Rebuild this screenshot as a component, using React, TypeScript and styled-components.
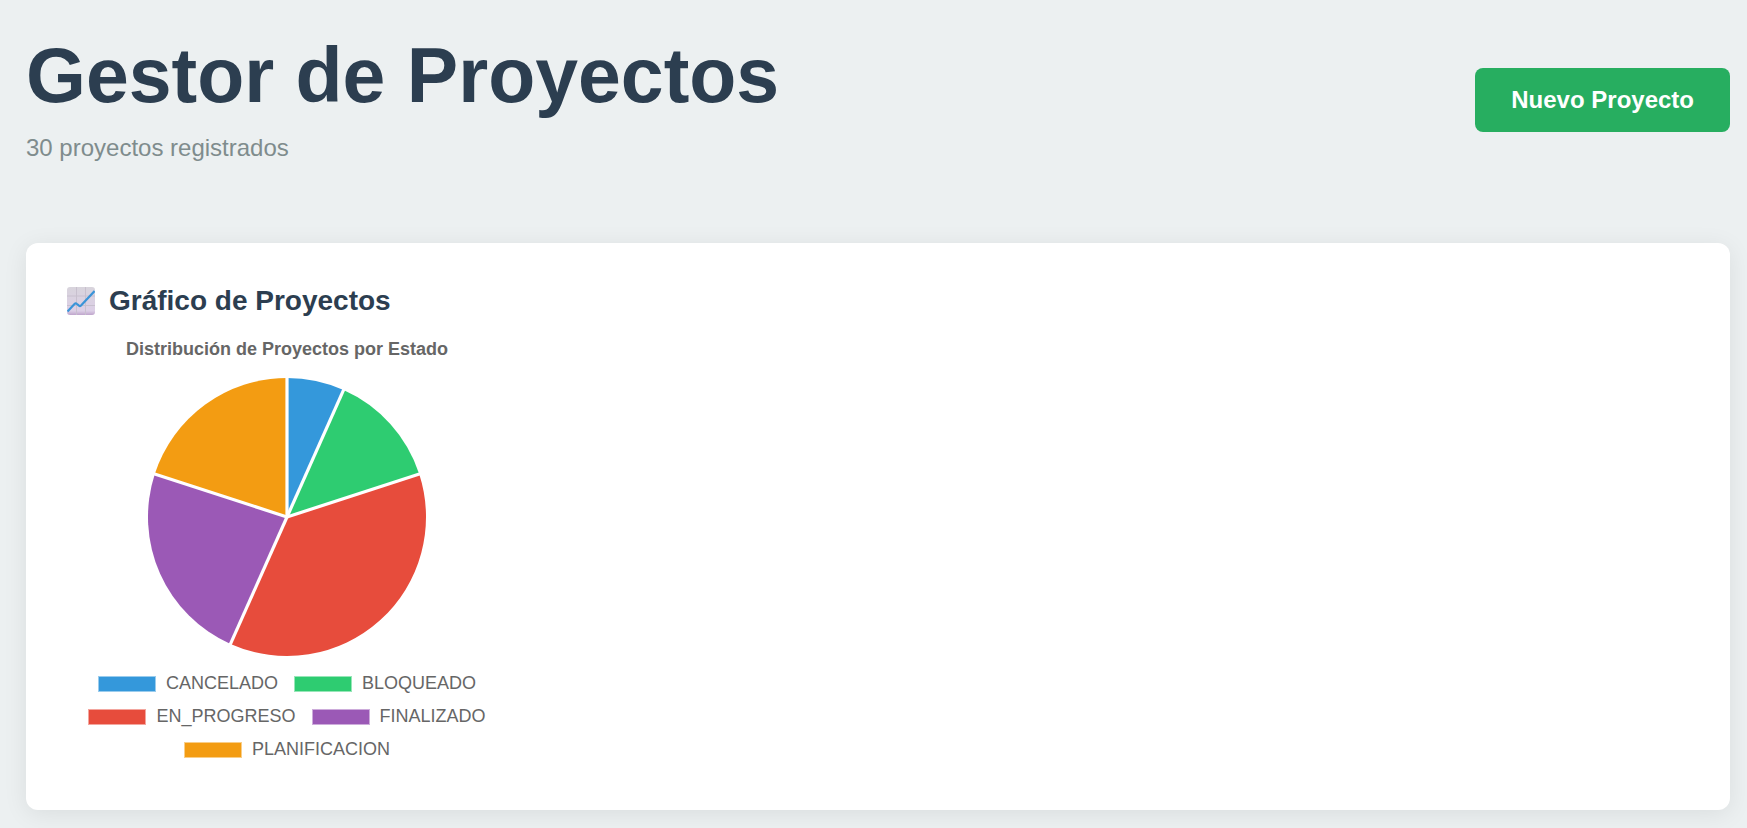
import React from 'react';
import styled, { createGlobalStyle } from 'styled-components';

const GlobalStyle = createGlobalStyle`
  *, *::before, *::after { box-sizing: border-box; }
  body {
    margin: 0;
    background: #ecf0f1;
    color: #2c3e50;
    font-family: "Liberation Sans", Arial, sans-serif;
  }
`;

const Page = styled.main`
  padding: 31px 17px 18px 26px;
`;

const Header = styled.header`
  display: flex;
  align-items: center;
  justify-content: space-between;
  gap: 24px;
  margin-bottom: 74px;
`;

const Title = styled.h1`
  margin: 0 0 8px;
  font-size: 77px;
  line-height: 88px;
  font-weight: 700;
`;

const Subtitle = styled.p`
  margin: 0;
  font-size: 24px;
  line-height: 42px;
  color: #7f8c8d;
`;

const PrimaryButton = styled.button`
  flex-shrink: 0;
  height: 64px;
  padding: 0 36px;
  border: 0;
  border-radius: 8px;
  background: #27ae60;
  color: #fff;
  font-family: inherit;
  font-size: 24px;
  font-weight: 700;
  cursor: pointer;
`;

const Card = styled.section`
  padding: 41px 41px 44px;
  border-radius: 12px;
  background: #fff;
  box-shadow: 0 4px 24px rgba(0, 0, 0, 0.08);
`;

const CardTitle = styled.h2`
  display: flex;
  align-items: center;
  gap: 14px;
  margin: 0 0 20px;
  font-size: 28px;
  line-height: 34px;
  font-weight: 700;
`;

const Chart = styled.figure`
  display: flex;
  flex-direction: column;
  align-items: center;
  width: 440px;
  max-width: 100%;
  margin: 0;
  color: #666;
  font-size: 18px;
`;

const ChartTitle = styled.figcaption`
  margin-bottom: 17px;
  line-height: 22px;
  font-weight: 700;
`;

const Legend = styled.ul`
  display: flex;
  flex-wrap: wrap;
  justify-content: center;
  column-gap: 16px;
  margin: 10px 0 0;
  padding: 0 20px;
  list-style: none;
`;

const LegendItem = styled.li`
  display: flex;
  align-items: center;
  gap: 10px;
  line-height: 33px;
`;

const Swatch = styled.span<{ $color: string }>`
  width: 58px;
  height: 16px;
  border: 1px solid rgba(255, 255, 255, 0.5);
  background: ${({ $color }) => $color};
`;

const slices = [
  { label: 'CANCELADO', value: 2, color: '#3498db' },
  { label: 'BLOQUEADO', value: 4, color: '#2ecc71' },
  { label: 'EN_PROGRESO', value: 11, color: '#e74c3c' },
  { label: 'FINALIZADO', value: 7, color: '#9b59b6' },
  { label: 'PLANIFICACION', value: 6, color: '#f39c12' },
];

const total = slices.reduce((sum, s) => sum + s.value, 0);

function point(fraction: number, radius: number) {
  const angle = fraction * Math.PI * 2 - Math.PI / 2;
  return `${140 + radius * Math.cos(angle)} ${140 + radius * Math.sin(angle)}`;
}

function PieChart() {
  let start = 0;
  const arcs = slices.map((s) => {
    const from = start / total;
    start += s.value;
    return { ...s, from, to: start / total };
  });
  return (
    <svg width="280" height="280" viewBox="0 0 280 280" role="img" aria-label="Distribución de Proyectos por Estado">
      {arcs.map((a) => (
        <path
          key={a.label}
          fill={a.color}
          d={`M140 140L${point(a.from, 139)}A139 139 0 ${a.to - a.from > 0.5 ? 1 : 0} 1 ${point(a.to, 139)}Z`}
        />
      ))}
      {arcs.map((a) => (
        <path key={a.label} stroke="#fff" strokeWidth="3.2" d={`M140 140L${point(a.from, 140)}`} />
      ))}
    </svg>
  );
}

function TrendIcon() {
  return (
    <svg width="28" height="28" viewBox="0 0 28 28" aria-hidden="true">
      <defs>
        <linearGradient id="paper" x1="0" y1="0" x2="0" y2="1">
          <stop offset="0" stopColor="#d8d4dc" />
          <stop offset="0.85" stopColor="#dccfe6" />
          <stop offset="1" stopColor="#bfa5cc" />
        </linearGradient>
      </defs>
      <rect width="28" height="28" rx="3" fill="url(#paper)" />
      <path d="M9.5 0V28M18.5 0V28M0 9H28M0 18.5H28" stroke="#c8c0ce" strokeWidth="1" />
      <path d="M0.5 24.5L7.5 17Q8.7 15.8 10 17L12 18.7Q13 19.5 14 18.5L27.6 4" fill="none" stroke="#3a94d8" strokeWidth="2.2" />
    </svg>
  );
}

export default function App() {
  return (
    <>
      <GlobalStyle />
      <Page>
        <Header>
          <div>
            <Title>Gestor de Proyectos</Title>
            <Subtitle>30 proyectos registrados</Subtitle>
          </div>
          <PrimaryButton type="button">Nuevo Proyecto</PrimaryButton>
        </Header>
        <Card>
          <CardTitle>
            <TrendIcon />
            Gráfico de Proyectos
          </CardTitle>
          <Chart>
            <ChartTitle>Distribución de Proyectos por Estado</ChartTitle>
            <PieChart />
            <Legend>
              {slices.map((s) => (
                <LegendItem key={s.label}>
                  <Swatch $color={s.color} />
                  {s.label}
                </LegendItem>
              ))}
            </Legend>
          </Chart>
        </Card>
      </Page>
    </>
  );
}
